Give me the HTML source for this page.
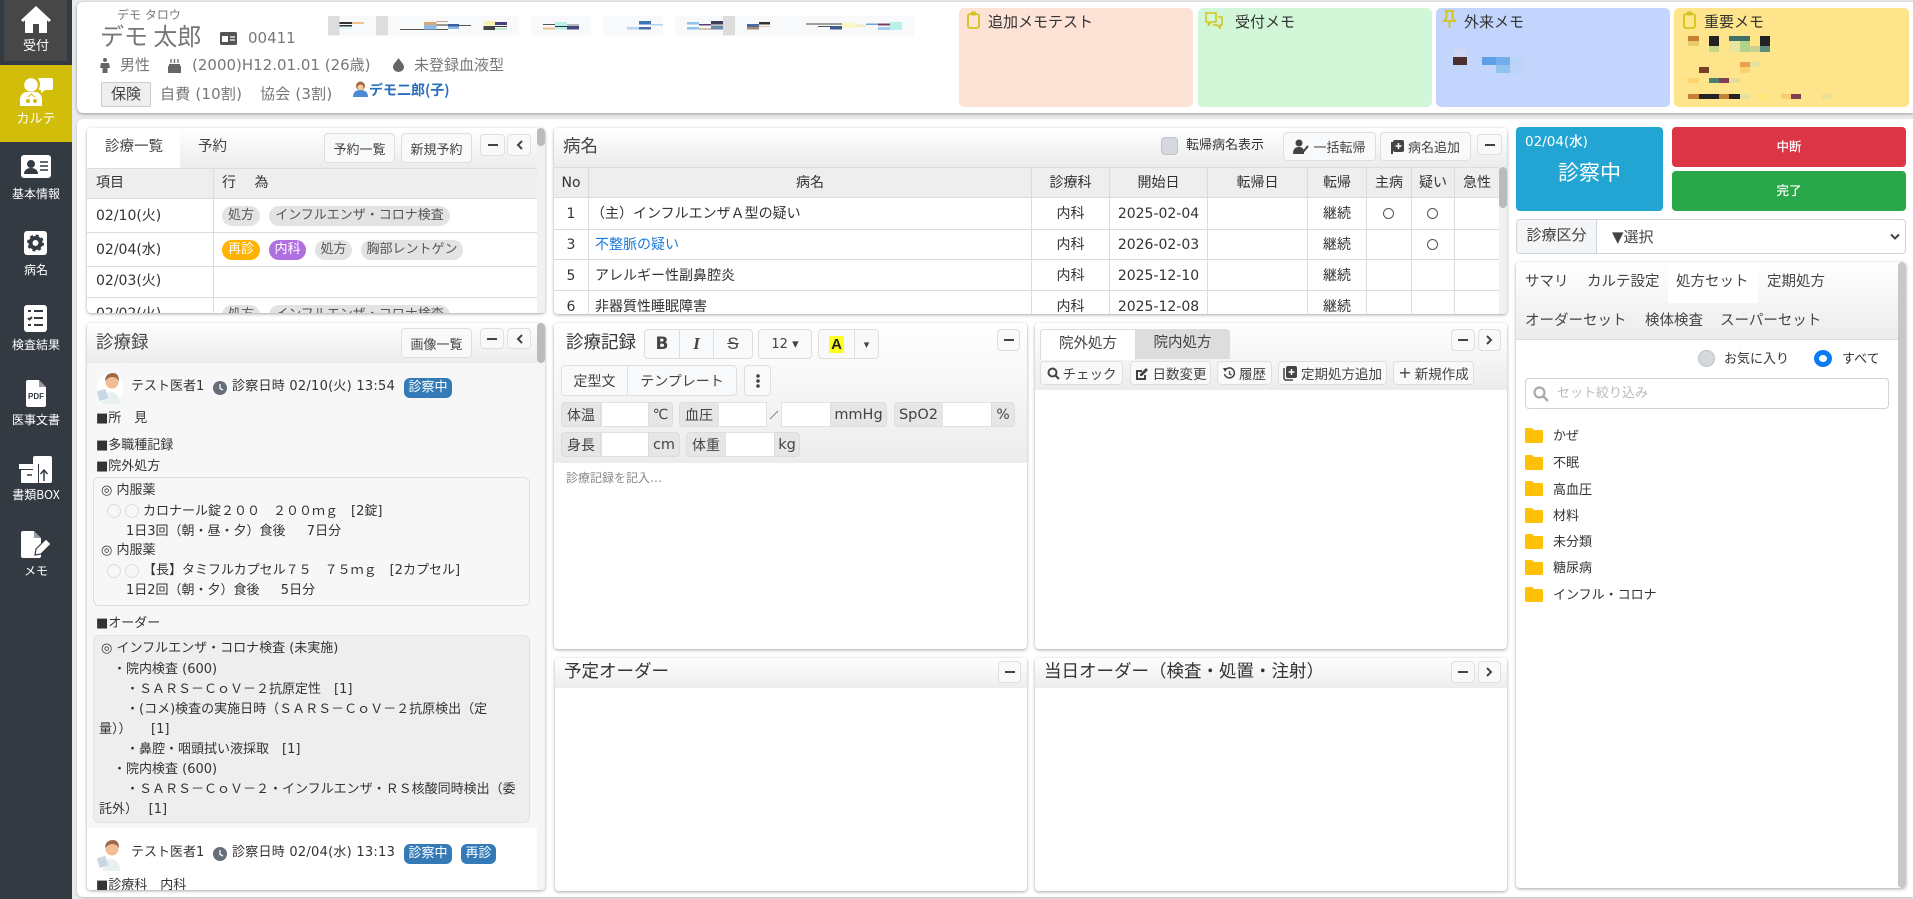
<!DOCTYPE html>
<html lang="ja"><head><meta charset="utf-8"><title>カルテ</title>
<style>
*{box-sizing:border-box}
html,body{margin:0;padding:0;width:1913px;height:899px;overflow:hidden;background:#eaeaea;font-family:"DejaVu Sans","Noto Sans CJK JP",sans-serif;font-size:13px;color:#333}
.a,.t,.b,.v{position:absolute}
.t{white-space:pre;line-height:20px;height:20px}
.w{color:#fff;font-weight:400;font-size:12px;text-align:center;left:0;width:72px;font-family:"Noto Sans CJK JP",sans-serif}
.b{background:#f8f9fa;border:1px solid #dfdfdf;border-radius:4px;display:flex;align-items:center;justify-content:center;color:#444;font-size:13px;white-space:pre}
.b svg{position:static}
.hd{background:linear-gradient(#fff,#ececec)}
.p{position:absolute;background:#fff;border-radius:4px;box-shadow:0 1px 3px rgba(0,0,0,.35);overflow:hidden}
.pl{position:absolute;height:20px;line-height:19px;border-radius:10px;background:#e3e3e3;color:#555;font-size:13px;text-align:center;white-space:pre}
.v{background:#e6e6e6;border:1px solid #dcdcdc;display:flex;align-items:center;justify-content:center;color:#444;font-size:14px;height:25px}
.i{background:#fff;border:1px solid #e2e2e2;height:25px;position:absolute}
.ln{position:absolute;background:#dcdcdc}
.c{text-align:center}
.bd{position:absolute;height:20px;line-height:19px;background:#337ab7;color:#fff;border-radius:6px;text-align:center;font-size:13px}
.fd{position:absolute;left:1525px;width:18px;height:15px}
svg{position:absolute;overflow:visible}
</style></head><body>

<!-- sidebar -->
<div class="a" style="left:0;top:0;width:72px;height:899px;background:#333a42"></div>
<div class="a" style="left:4px;top:0;width:63px;height:61px;background:#474747"></div>
<div class="a" style="left:0;top:65px;width:72px;height:77px;background:#d2bd0a"></div>
<svg style="left:21px;top:6px" width="30" height="27" viewBox="0 0 30 27"><path d="M15 0L30 14l-2 2-2-1.800V27H18V18H12V27H4V14.200L2 16 0 14z" fill="#fff"/></svg>
<div class="t w" style="top:35px;font-size:13px">受付</div>
<svg style="left:20px;top:78px" width="33" height="28" viewBox="0 0 33 28"><circle cx="11" cy="7" r="6.800" fill="#fff"/><path d="M20 0h11a2 2 0 0 1 2 2v8a2 2 0 0 1-2 2h-6l-4 3v-3h-1a2 2 0 0 1-1.500-.7c1-1.500 1.500-3.300 1.500-4.800 0-2.500-.8-4.500-1.800-5.800C18.600.2 19.300 0 20 0z" fill="#fff"/><path d="M0 28v-6c0-5 3-8 7-8h8c4 0 7 3 7 8v6z" fill="#fff"/><circle cx="8" cy="23" r="2" fill="#d2bd0a"/><circle cx="15" cy="23" r="2" fill="#d2bd0a"/><path d="M8 19l3-3 4 3" fill="none" stroke="#d2bd0a"/></svg>
<div class="t w" style="top:108px;font-size:13px">カルテ</div>
<svg style="left:21px;top:155px" width="30" height="23" viewBox="0 0 30 23"><rect width="30" height="23" rx="3" fill="#fff"/><circle cx="10" cy="9" r="4" fill="#333a42"/><path d="M3 19c0-4 3-6 7-6s7 2 7 6z" fill="#333a42"/><path d="M19 7h8M19 11h8M19 15h8" stroke="#333a42" stroke-width="1.500"/></svg>
<div class="t w" style="top:184px">基本情報</div>
<svg style="left:24px;top:231px" width="23" height="24" viewBox="0 0 23 24"><rect width="23" height="24" rx="3" fill="#fff"/><circle cx="11.500" cy="12" r="5" fill="none" stroke="#333a42" stroke-width="4"/><circle cx="11.500" cy="12" r="7.500" fill="none" stroke="#333a42" stroke-width="2" stroke-dasharray="3 2.900"/></svg>
<div class="t w" style="top:260px">病名</div>
<svg style="left:24px;top:305px" width="23" height="27" viewBox="0 0 23 27"><rect width="23" height="27" rx="3" fill="#fff"/><path d="M4 6h3M4 13l1.500 1.500L8 12M4 20h3M10 6h9M10 13h9M10 20h9" stroke="#333a42" stroke-width="2" fill="none"/></svg>
<div class="t w" style="top:335px">検査結果</div>
<svg style="left:26px;top:380px" width="20" height="27" viewBox="0 0 20 27"><path d="M0 2a2 2 0 0 1 2-2h11l7 7v18a2 2 0 0 1-2 2H2a2 2 0 0 1-2-2z" fill="#fff"/><path d="M13 0v7h7z" fill="#333a42" opacity=".5"/><text x="10" y="19" text-anchor="middle" font-size="8" font-weight="700" fill="#333a42" font-family="Liberation Sans,sans-serif">PDF</text></svg>
<div class="t w" style="top:410px">医事文書</div>
<svg style="left:19px;top:456px" width="33" height="27" viewBox="0 0 33 27"><rect x="14" width="19" height="27" rx="2" fill="#fff"/><rect y="8" width="20" height="5" fill="#fff"/><rect x="2" y="14" width="17" height="13" rx="1" fill="#fff"/><path d="M8 19h5" stroke="#333a42" stroke-width="1.500"/><path d="M25 25v-10M21.500 18l3.500-4 3.500 4" stroke="#333a42" stroke-width="1.500" fill="none"/><path d="M19.500 8v19" stroke="#333a42" stroke-width="1"/></svg>
<div class="t w" style="top:485px">書類BOX</div>
<svg style="left:21px;top:531px" width="31" height="27" viewBox="0 0 31 27"><path d="M0 2a2 2 0 0 1 2-2h11l7 7v18a2 2 0 0 1-2 2H2a2 2 0 0 1-2-2z" fill="#fff"/><path d="M13 0v7h7z" fill="#333a42" opacity=".5"/><path d="M14 24l1-6 10-10 5 5-10 10z" fill="#fff" stroke="#333a42" stroke-width="1.200"/></svg>
<div class="t w" style="top:561px">メモ</div>

<!-- header card -->
<div class="a" style="left:77px;top:2px;width:1836px;height:111px;background:#fff;border-radius:6px 0 0 6px;box-shadow:0 1px 3px rgba(0,0,0,.35)"></div>
<div class="t" style="left:117px;top:5px;font-size:12px;color:#777">デモ タロウ</div>
<div class="t" style="left:100px;top:20px;font-size:24px;line-height:30px;height:30px;color:#777;font-family:'Noto Sans CJK JP',sans-serif">デモ 太郎</div>
<svg style="left:220px;top:32px" width="17" height="13" viewBox="0 0 17 13"><rect width="17" height="13" rx="1.500" fill="#555"/><rect x="2" y="4" width="6" height="6" fill="#fff"/><path d="M10 5h5M10 8h5" stroke="#fff" stroke-width="1.300"/></svg>
<div class="t" style="left:248px;top:28px;font-size:15px;color:#777">00411</div>
<svg style="left:100px;top:58px" width="10" height="15" viewBox="0 0 10 15"><circle cx="5" cy="2" r="2" fill="#666"/><path d="M1 5h8l1 5H7.500v5h-5v-5H0z" fill="#666"/></svg>
<div class="t" style="left:120px;top:55px;font-size:15px;color:#777">男性</div>
<svg style="left:168px;top:58px" width="13" height="15" viewBox="0 0 13 15"><path d="M0 8h13v7H0zM1 6h11v2H1z" fill="#666"/><path d="M3 1v4M6.500 1v4M10 1v4" stroke="#666" stroke-width="1.300"/></svg>
<div class="t" style="left:192px;top:55px;font-size:15px;color:#777">(2000)H12.01.01 (26歳)</div>
<svg style="left:393px;top:58px" width="11" height="14" viewBox="0 0 11 14"><path d="M5.500 0C8 4 11 6 11 9a5.500 5 0 0 1-11 0C0 6 3 4 5.500 0z" fill="#666"/></svg>
<div class="t" style="left:414px;top:55px;font-size:15px;color:#777">未登録血液型</div>
<div class="a" style="left:101px;top:82px;width:50px;height:25px;background:#eee;border:1px solid #ccc;border-radius:2px;text-align:center;line-height:22px;font-size:15px;color:#444">保険</div>
<div class="t" style="left:160px;top:84px;font-size:15px;color:#777;letter-spacing:.2px">自費 (10割)</div>
<div class="t" style="left:260px;top:84px;font-size:15px;color:#777;letter-spacing:.2px">協会 (3割)</div>
<svg style="left:352px;top:81px" width="17" height="16" viewBox="0 0 17 16"><circle cx="8.500" cy="5" r="4.500" fill="#a5673f"/><circle cx="8.500" cy="6.500" r="3" fill="#f5c9a4"/><path d="M1 16c0-5 3-7 7.500-7S16 11 16 16z" fill="#4a8ad6"/></svg>
<div class="t" style="left:369px;top:80px;font-size:14px;font-weight:700;color:#2a6ebb;font-family:'Noto Sans CJK JP',sans-serif">デモ二郎(子)</div>

<!-- blurred strip -->
<svg style="left:320px;top:0" width="640" height="110" viewBox="0 0 1568 330" preserveAspectRatio="none" shape-rendering="crispEdges">
<rect x="20" y="48" width="28" height="59" fill="#ddd"/><rect x="48" y="48" width="89" height="59" fill="#f8f9fa"/>
<rect x="137" y="48" width="30" height="59" fill="#ddd"/><rect x="167" y="48" width="321" height="59" fill="#f8f9fa"/>
<rect x="517" y="48" width="147" height="59" fill="#f8f9fa"/><rect x="693" y="48" width="147" height="59" fill="#f8f9fa"/>
<rect x="870" y="48" width="117" height="59" fill="#f8f9fa"/><rect x="987" y="48" width="30" height="59" fill="#ddd"/><rect x="1017" y="48" width="438" height="59" fill="#f8f9fa"/>
<rect x="48" y="66" width="30" height="6" fill="#333"/><rect x="78" y="66" width="30" height="6" fill="#f3c28d"/><rect x="48" y="75" width="30" height="4" fill="#333"/><rect x="48" y="80" width="30" height="7" fill="#dff7f5"/>
<rect x="196" y="87" width="118" height="3" fill="#555"/><rect x="255" y="66" width="30" height="9" fill="#d9a877"/><rect x="255" y="75" width="30" height="13" fill="#8cbbe8"/><rect x="285" y="63" width="29" height="3" fill="#c8a090"/><rect x="285" y="74" width="29" height="3" fill="#333"/><rect x="314" y="72" width="27" height="8" fill="#3d5f9e"/><rect x="314" y="80" width="27" height="7" fill="#8cbbe8"/><rect x="341" y="75" width="29" height="3" fill="#555"/>
<rect x="400" y="63" width="29" height="13" fill="#f7f0b0"/><rect x="429" y="66" width="29" height="9" fill="#4a3f7a"/><rect x="400" y="78" width="29" height="12" fill="#444"/><rect x="429" y="78" width="29" height="3" fill="#333"/><rect x="429" y="84" width="29" height="6" fill="#bfe8cc"/>
<rect x="546" y="72" width="30" height="3" fill="#555"/><rect x="546" y="82" width="30" height="6" fill="#eac38f"/><rect x="576" y="66" width="29" height="12" fill="#b8f0ec"/><rect x="576" y="78" width="29" height="3" fill="#333"/><rect x="576" y="81" width="29" height="7" fill="#b8f0ec"/><rect x="605" y="72" width="30" height="6" fill="#bbb"/><rect x="605" y="78" width="30" height="10" fill="#454a7e"/>
<rect x="752" y="81" width="30" height="7" fill="#b5d4ee"/><rect x="782" y="63" width="29" height="10" fill="#3f74b5"/><rect x="782" y="81" width="29" height="7" fill="#4a6fa5"/><rect x="811" y="72" width="29" height="4" fill="#a8d8f0"/>
<rect x="899" y="66" width="30" height="8" fill="#8cc4ec"/><rect x="899" y="81" width="30" height="7" fill="#8cc4ec"/><rect x="929" y="72" width="29" height="5" fill="#5a3f70"/><rect x="929" y="86" width="29" height="3" fill="#b08a60"/><rect x="958" y="63" width="29" height="10" fill="#3a4258"/><rect x="958" y="76" width="29" height="13" fill="#6a8aa8"/>
<rect x="1046" y="72" width="30" height="9" fill="#4d6a9a"/><rect x="1046" y="81" width="30" height="7" fill="#a98b6c"/><rect x="1076" y="66" width="26" height="7" fill="#333"/><rect x="1076" y="78" width="26" height="3" fill="#e8c9a0"/>
<rect x="1191" y="71" width="88" height="3" fill="#444"/><rect x="1220" y="78" width="29" height="3" fill="#555"/><rect x="1249" y="78" width="30" height="10" fill="#3f5a92"/><rect x="1279" y="68" width="30" height="16" fill="#fbf7c8"/><rect x="1309" y="74" width="29" height="7" fill="#f3eec0"/><rect x="1338" y="71" width="29" height="4" fill="#6aa7d8"/><rect x="1367" y="71" width="29" height="6" fill="#7a3f60"/><rect x="1367" y="81" width="29" height="9" fill="#a5d0f0"/><rect x="1396" y="66" width="30" height="24" fill="#b8f0ea"/>
</svg>

<!-- memos -->
<div class="a" style="left:959px;top:8px;width:234px;height:99px;background:#fde2d6;border-radius:5px"></div>
<div class="a" style="left:1198px;top:8px;width:234px;height:99px;background:#d1f6d8;border-radius:5px"></div>
<div class="a" style="left:1436px;top:8px;width:234px;height:99px;background:#c3d5fc;border-radius:5px"></div>
<div class="a" style="left:1674px;top:8px;width:235px;height:99px;background:#fee58c;border-radius:5px"></div>
<svg style="left:967px;top:11px" width="13" height="18" viewBox="0 0 13 18"><rect x="1" y="3" width="11" height="14" rx="2" fill="none" stroke="#d4c21a" stroke-width="1.800"/><rect x="4" y="0.500" width="5" height="4" rx="1" fill="#d4c21a"/></svg>
<div class="t" style="left:988px;top:12px;font-size:15px;color:#333">追加メモテスト</div>
<svg style="left:1205px;top:12px" width="18" height="17" viewBox="0 0 18 17"><path d="M1 1h10v9H6l-2.500 3v-3H1z" fill="none" stroke="#d4c21a" stroke-width="1.500"/><path d="M13 5h4v8h-2v3l-3-3H8" fill="none" stroke="#d4c21a" stroke-width="1.500"/></svg>
<div class="t" style="left:1235px;top:12px;font-size:15px;color:#333">受付メモ</div>
<svg style="left:1443px;top:10px" width="13" height="19" viewBox="0 0 13 19"><path d="M2 1h9M3.500 1v7L1 11h11L9.500 8V1M6.500 11v7" fill="none" stroke="#d4c21a" stroke-width="1.800"/></svg>
<div class="t" style="left:1464px;top:12px;font-size:15px;color:#333">外来メモ</div>
<svg style="left:1683px;top:11px" width="13" height="18" viewBox="0 0 13 18"><rect x="1" y="3" width="11" height="14" rx="2" fill="none" stroke="#d4c21a" stroke-width="1.800"/><rect x="4" y="0.500" width="5" height="4" rx="1" fill="#d4c21a"/></svg>
<div class="t" style="left:1704px;top:12px;font-size:15px;color:#333">重要メモ</div>
<svg style="left:1500px;top:0" width="413" height="120" viewBox="0 0 1239 360" shape-rendering="crispEdges">
<rect x="564" y="108" width="33" height="15" fill="#c97e35"/><rect x="564" y="123" width="33" height="15" fill="#e8cc6a"/><rect x="627" y="108" width="30" height="30" fill="#222"/><rect x="627" y="138" width="30" height="18" fill="#c5d88a"/><rect x="687" y="108" width="63" height="15" fill="#3f7068"/><rect x="687" y="123" width="33" height="33" fill="#e8e5a0"/><rect x="720" y="123" width="30" height="33" fill="#b0d388"/><rect x="750" y="108" width="30" height="30" fill="#fde580"/><rect x="750" y="138" width="30" height="18" fill="#ccd090"/><rect x="780" y="108" width="30" height="30" fill="#222"/><rect x="780" y="138" width="30" height="18" fill="#5a8f7a"/>
<rect x="720" y="186" width="30" height="15" fill="#e8a24e"/><rect x="750" y="186" width="30" height="15" fill="#e8e0a0"/><rect x="720" y="201" width="30" height="18" fill="#fdd070"/><rect x="597" y="201" width="30" height="18" fill="#7a3f28"/>
<rect x="564" y="234" width="33" height="15" fill="#fdd570"/><rect x="627" y="234" width="30" height="15" fill="#4a8070"/><rect x="657" y="234" width="30" height="15" fill="#803f50"/><rect x="687" y="234" width="33" height="15" fill="#e5dc9c"/>
<rect x="564" y="282" width="33" height="15" fill="#c57f38"/><rect x="597" y="282" width="60" height="15" fill="#222"/><rect x="657" y="282" width="30" height="15" fill="#c57f38"/><rect x="687" y="282" width="33" height="15" fill="#222"/><rect x="720" y="282" width="30" height="15" fill="#e8e0a0"/><rect x="780" y="282" width="30" height="15" fill="#fde97a"/><rect x="843" y="282" width="30" height="15" fill="#fdcb70"/><rect x="873" y="282" width="30" height="15" fill="#803f50"/><rect x="966" y="282" width="30" height="15" fill="#ece094"/>
</svg>
<svg style="left:1450px;top:45px" width="80" height="35" viewBox="0 0 80 35" shape-rendering="crispEdges"><rect x="3" y="4" width="14" height="8" fill="#ced7f3"/><rect x="3" y="12" width="14" height="8" fill="#4c2f2f"/><rect x="32" y="12" width="14" height="8" fill="#5f9fe8"/><rect x="46" y="12" width="14" height="8" fill="#73aeec"/><rect x="46" y="20" width="14" height="8" fill="#8ec4ee"/><rect x="60" y="12" width="14" height="16" fill="#bcd3f8"/></svg>

<!-- main white background -->
<div class="a" style="left:77px;top:119px;width:1836px;height:778px;background:#fff;border-radius:6px 0 0 6px;box-shadow:0 1px 2px rgba(0,0,0,.2)"></div>

<!-- panel: 診療一覧 -->
<div class="p" style="left:87px;top:128px;width:458px;height:185px">
  <div class="a hd" style="left:0;top:0;width:450px;height:40px"></div>
  <div class="a" style="left:0;top:0;width:93px;height:40px;background:#fff"></div>
  <div class="a" style="left:0;top:40px;width:450px;height:31px;background:#eee;border-top:1px solid #ddd;border-bottom:1px solid #ddd"></div>
  <div class="ln" style="left:126px;top:40px;width:1px;height:145px"></div>
  <div class="ln" style="left:0;top:104px;width:450px;height:1px"></div>
  <div class="ln" style="left:0;top:138px;width:450px;height:1px"></div>
  <div class="ln" style="left:0;top:169px;width:450px;height:1px"></div>
  <div class="a" style="left:450px;top:0;width:8px;height:185px;background:#f1f1f1"></div>
  <div class="a" style="left:450px;top:0;width:8px;height:18px;background:#bbb;border-radius:4px"></div>
  <div class="t" style="left:18px;top:9px;font-size:14.500px;color:#444">診療一覧</div>
  <div class="t" style="left:111px;top:9px;font-size:14.500px;color:#444">予約</div>
  <div class="t" style="left:9px;top:45px;font-size:14px">項目</div>
  <div class="t" style="left:135px;top:45px;font-size:14px">行　 為</div>
  <div class="t" style="left:9px;top:78px;font-size:14px">02/10(火)</div>
  <div class="t" style="left:9px;top:112px;font-size:14px">02/04(水)</div>
  <div class="t" style="left:9px;top:143px;font-size:14px">02/03(火)</div>
  <div class="t" style="left:9px;top:176px;font-size:14px">02/02(火)</div>
  <div class="pl" style="left:135px;top:78px;width:38px">処方</div>
  <div class="pl" style="left:182px;top:78px;width:181px">インフルエンザ・コロナ検査</div>
  <div class="pl" style="left:135px;top:112px;width:38px;background:#ffb300;color:#fff">再診</div>
  <div class="pl" style="left:182px;top:112px;width:37px;background:#b06fe0;color:#fff">内科</div>
  <div class="pl" style="left:228px;top:112px;width:37px">処方</div>
  <div class="pl" style="left:274px;top:112px;width:102px">胸部レントゲン</div>
  <div class="pl" style="left:135px;top:177px;width:38px">処方</div>
  <div class="pl" style="left:182px;top:177px;width:181px">インフルエンザ・コロナ検査</div>
</div>
<div class="b" style="left:324px;top:133px;width:71px;height:30px">予約一覧</div>
<div class="b" style="left:401px;top:133px;width:71px;height:30px">新規予約</div>
<div class="b" style="left:480px;top:134px;width:25px;height:22px"><svg width="10" height="2" viewBox="0 0 10 2"><path d="M0 1h10" stroke="#444" stroke-width="2"/></svg></div>
<div class="b" style="left:507px;top:134px;width:24px;height:22px"><svg width="7" height="10" viewBox="0 0 7 10"><path d="M6 1L2 5l4 4" stroke="#444" stroke-width="2" fill="none"/></svg></div>

<!-- panel: 診療録 -->
<div class="p" style="left:87px;top:323px;width:458px;height:567px;background:#f7f7f7">
  <div class="a hd" style="left:0;top:0;width:450px;height:40px"></div>
  <div class="a" style="left:450px;top:0;width:8px;height:567px;background:#f5f5f5"></div>
  <div class="a" style="left:450px;top:0;width:8px;height:40px;background:#bbb;border-radius:4px"></div>
  <div class="t" style="left:9px;top:10px;font-size:17.500px;color:#444">診療録</div>
  <div class="a" style="left:0;top:505px;width:450px;height:62px;background:#fff"></div>
</div>
<div class="b" style="left:401px;top:328px;width:71px;height:30px">画像一覧</div>
<div class="b" style="left:480px;top:328px;width:24px;height:21px"><svg width="10" height="2" viewBox="0 0 10 2"><path d="M0 1h10" stroke="#444" stroke-width="2"/></svg></div>
<div class="b" style="left:507px;top:328px;width:24px;height:21px"><svg width="7" height="10" viewBox="0 0 7 10"><path d="M6 1L2 5l4 4" stroke="#444" stroke-width="2" fill="none"/></svg></div>

<svg style="left:97px;top:371px" width="27" height="33" viewBox="0 0 27 33"><ellipse cx="13" cy="17" rx="13" ry="16" fill="#fff"/><path d="M6 33c0-8 3-12 8-12s9 4 9 12z" fill="#e8f0f0"/><circle cx="15" cy="11" r="6.500" fill="#f2bd94"/><path d="M8 10c0-6 4-8 8-8s6 3 6 8c-2-3-4-4-7-4s-5 2-7 4z" fill="#9b6a4a"/><rect x="1" y="19" width="9" height="10" fill="#c9d8e4" transform="rotate(-18 5 24)"/></svg>
<div class="t" style="left:131px;top:377px">テスト医者1</div>
<svg style="left:213px;top:381px" width="14" height="14" viewBox="0 0 14 14"><circle cx="7" cy="7" r="7" fill="#666f78"/><path d="M7 3v4.500l3 1.500" stroke="#fff" stroke-width="1.300" fill="none"/></svg>
<div class="t" style="left:232px;top:377px;letter-spacing:.25px">診察日時 02/10(火) 13:54</div>
<div class="bd" style="left:404px;top:378px;width:48px">診察中</div>
<div class="t" style="left:96px;top:409px">■所　見</div>
<div class="t" style="left:96px;top:436px">■多職種記録</div>
<div class="t" style="left:96px;top:457px">■院外処方</div>
<div class="a" style="left:93px;top:477px;width:437px;height:129px;border:1px solid #ddd;border-radius:6px;background:#f7f7f7"></div>
<div class="t" style="left:101px;top:481px">◎ 内服薬</div>
<div class="a" style="left:107px;top:504px;width:14px;height:14px;border:1px solid #ddd;border-radius:50%"></div>
<div class="a" style="left:125px;top:504px;width:14px;height:14px;border:1px solid #ddd;border-radius:50%"></div>
<div class="t" style="left:143px;top:502px">カロナール錠２００　２００ｍｇ　[2錠]</div>
<div class="t" style="left:126px;top:522px">1日3回（朝・昼・夕）食後　  7日分</div>
<div class="t" style="left:101px;top:541px">◎ 内服薬</div>
<div class="a" style="left:107px;top:564px;width:14px;height:14px;border:1px solid #ddd;border-radius:50%"></div>
<div class="a" style="left:125px;top:564px;width:14px;height:14px;border:1px solid #ddd;border-radius:50%"></div>
<div class="t" style="left:143px;top:561px">【長】タミフルカプセル７５　７５ｍｇ　[2カプセル]</div>
<div class="t" style="left:126px;top:581px">1日2回（朝・夕）食後　  5日分</div>
<div class="t" style="left:96px;top:614px">■オーダー</div>
<div class="a" style="left:93px;top:635px;width:437px;height:188px;border:1px solid #e2e2e2;border-radius:6px;background:#eee"></div>
<div class="t" style="left:101px;top:639px">◎ インフルエンザ・コロナ検査 (未実施)</div>
<div class="t" style="left:113px;top:660px">・院内検査 (600)</div>
<div class="t" style="left:126px;top:680px">・ＳＡＲＳ－ＣｏＶ－２抗原定性　[1]</div>
<div class="t" style="left:126px;top:700px">・(コメ)検査の実施日時（ＳＡＲＳ－ＣｏＶ－２抗原検出（定</div>
<div class="t" style="left:99px;top:720px">量））　　[1]</div>
<div class="t" style="left:126px;top:740px">・鼻腔・咽頭拭い液採取　[1]</div>
<div class="t" style="left:113px;top:760px">・院内検査 (600)</div>
<div class="t" style="left:126px;top:780px">・ＳＡＲＳ－ＣｏＶ－２・インフルエンザ・ＲＳ核酸同時検出（委</div>
<div class="t" style="left:99px;top:800px">託外）　 [1]</div>
<svg style="left:97px;top:838px" width="27" height="33" viewBox="0 0 27 33"><path d="M6 33c0-8 3-12 8-12s9 4 9 12z" fill="#e8f0f0"/><circle cx="15" cy="11" r="6.500" fill="#f2bd94"/><path d="M8 10c0-6 4-8 8-8s6 3 6 8c-2-3-4-4-7-4s-5 2-7 4z" fill="#9b6a4a"/><rect x="1" y="19" width="9" height="10" fill="#c9d8e4" transform="rotate(-18 5 24)"/></svg>
<div class="t" style="left:131px;top:843px">テスト医者1</div>
<svg style="left:213px;top:847px" width="14" height="14" viewBox="0 0 14 14"><circle cx="7" cy="7" r="7" fill="#666f78"/><path d="M7 3v4.500l3 1.500" stroke="#fff" stroke-width="1.300" fill="none"/></svg>
<div class="t" style="left:232px;top:843px;letter-spacing:.25px">診察日時 02/04(水) 13:13</div>
<div class="bd" style="left:404px;top:844px;width:48px">診察中</div>
<div class="bd" style="left:461px;top:844px;width:35px">再診</div>
<div class="a" style="left:87px;top:876px;width:450px;height:14px;overflow:hidden"><div class="t" style="left:9px;top:0">■診療科　内科</div></div>

<!-- panel: 病名 -->
<div class="p" style="left:554px;top:128px;width:953px;height:186px">
  <div class="a hd" style="left:0;top:0;width:953px;height:39px"></div>
  <div class="a" style="left:0;top:39px;width:953px;height:31px;background:#eee;border-top:1px solid #ddd;border-bottom:1px solid #ddd"></div>
  <div class="a" style="left:945px;top:39px;width:8px;height:147px;background:#f1f1f1"></div>
  <div class="a" style="left:945px;top:39px;width:8px;height:41px;background:#bbb;border-radius:4px"></div>
  <div class="ln" style="left:0;top:101px;width:945px;height:1px"></div>
  <div class="ln" style="left:0;top:131px;width:945px;height:1px"></div>
  <div class="ln" style="left:0;top:162px;width:945px;height:1px"></div>
  <div class="ln" style="left:34px;top:39px;width:1px;height:147px"></div>
  <div class="ln" style="left:477px;top:39px;width:1px;height:147px"></div>
  <div class="ln" style="left:555px;top:39px;width:1px;height:147px"></div>
  <div class="ln" style="left:653px;top:39px;width:1px;height:147px"></div>
  <div class="ln" style="left:753px;top:39px;width:1px;height:147px"></div>
  <div class="ln" style="left:812px;top:39px;width:1px;height:147px"></div>
  <div class="ln" style="left:857px;top:39px;width:1px;height:147px"></div>
  <div class="ln" style="left:900px;top:39px;width:1px;height:147px"></div>
  <div class="t" style="left:9px;top:9px;font-size:17.500px;color:#444">病名</div>
  <!-- thead -->
  <div class="t c" style="left:0;top:45px;width:34px;font-size:14px">No</div>
  <div class="t c" style="left:35px;top:45px;width:442px;font-size:14px">病名</div>
  <div class="t c" style="left:478px;top:45px;width:77px;font-size:14px">診療科</div>
  <div class="t c" style="left:556px;top:45px;width:97px;font-size:14px">開始日</div>
  <div class="t c" style="left:654px;top:45px;width:99px;font-size:14px">転帰日</div>
  <div class="t c" style="left:754px;top:45px;width:58px;font-size:14px">転帰</div>
  <div class="t c" style="left:813px;top:45px;width:44px;font-size:14px">主病</div>
  <div class="t c" style="left:858px;top:45px;width:42px;font-size:14px">疑い</div>
  <div class="t c" style="left:901px;top:45px;width:44px;font-size:14px">急性</div>
  <!-- r1 -->
  <div class="t c" style="left:0;top:76px;width:34px;font-size:14px">1</div>
  <div class="t" style="left:37px;top:76px;font-size:14px">（主）インフルエンザＡ型の疑い</div>
  <div class="t c" style="left:478px;top:76px;width:77px;font-size:14px">内科</div>
  <div class="t c" style="left:556px;top:76px;width:97px;font-size:14px">2025-02-04</div>
  <div class="t c" style="left:754px;top:76px;width:58px;font-size:14px">継続</div>
  <div class="a" style="left:829px;top:80px;width:11px;height:11px;border:1px solid #555;border-radius:50%"></div>
  <div class="a" style="left:873px;top:80px;width:11px;height:11px;border:1px solid #555;border-radius:50%"></div>
  <!-- r2 -->
  <div class="t c" style="left:0;top:107px;width:34px;font-size:14px">3</div>
  <div class="t" style="left:41px;top:107px;font-size:14px;color:#1a7bd8">不整脈の疑い</div>
  <div class="t c" style="left:478px;top:107px;width:77px;font-size:14px">内科</div>
  <div class="t c" style="left:556px;top:107px;width:97px;font-size:14px">2026-02-03</div>
  <div class="t c" style="left:754px;top:107px;width:58px;font-size:14px">継続</div>
  <div class="a" style="left:873px;top:111px;width:11px;height:11px;border:1px solid #555;border-radius:50%"></div>
  <!-- r3 -->
  <div class="t c" style="left:0;top:138px;width:34px;font-size:14px">5</div>
  <div class="t" style="left:41px;top:138px;font-size:14px">アレルギー性副鼻腔炎</div>
  <div class="t c" style="left:478px;top:138px;width:77px;font-size:14px">内科</div>
  <div class="t c" style="left:556px;top:138px;width:97px;font-size:14px">2025-12-10</div>
  <div class="t c" style="left:754px;top:138px;width:58px;font-size:14px">継続</div>
  <!-- r4 -->
  <div class="t c" style="left:0;top:169px;width:34px;font-size:14px">6</div>
  <div class="t" style="left:41px;top:169px;font-size:14px">非器質性睡眠障害</div>
  <div class="t c" style="left:478px;top:169px;width:77px;font-size:14px">内科</div>
  <div class="t c" style="left:556px;top:169px;width:97px;font-size:14px">2025-12-08</div>
  <div class="t c" style="left:754px;top:169px;width:58px;font-size:14px">継続</div>
</div>
<div class="a" style="left:1161px;top:137px;width:17px;height:18px;background:#d5d9de;border:1px solid #bcc2c8;border-radius:4px"></div>
<div class="t" style="left:1186px;top:136px">転帰病名表示</div>
<div class="b" style="left:1283px;top:132px;width:93px;height:29px"><svg style="margin-right:4px" width="16" height="16" viewBox="0 0 16 16"><circle cx="6" cy="4" r="3.500" fill="#444"/><path d="M0 15c0-5 2-7 6-7s5 2 5 7z" fill="#444"/><path d="M10 13l5-6" stroke="#444" stroke-width="2"/></svg>一括転帰</div>
<div class="b" style="left:1380px;top:132px;width:91px;height:29px"><svg style="margin-right:4px" width="13" height="14" viewBox="0 0 13 14"><rect x="2" y="0" width="11" height="12" rx="2" fill="#444"/><rect x="0" y="2" width="2" height="12" fill="#444"/><path d="M7.500 3v6M4.500 6h6" stroke="#fff" stroke-width="1.500"/></svg>病名追加</div>
<div class="b" style="left:1477px;top:134px;width:25px;height:21px"><svg width="10" height="2" viewBox="0 0 10 2"><path d="M0 1h10" stroke="#444" stroke-width="2"/></svg></div>

<!-- panel: 診療記録 -->
<div class="p" style="left:554px;top:323px;width:473px;height:326px">
  <div class="a hd" style="left:0;top:0;width:473px;height:140px"></div>
  <div class="t" style="left:12px;top:10px;font-size:17.500px;color:#333">診療記録</div>
  <div class="t" style="left:12px;top:145px;font-size:12px;color:#888">診療記録を記入…</div>
</div>
<div class="b" style="left:644px;top:329px;width:36px;height:30px;border-radius:4px 0 0 4px;font:700 17px 'DejaVu Sans',sans-serif">B</div>
<div class="b" style="left:679px;top:329px;width:35px;height:30px;border-radius:0;font:italic 700 17px 'Liberation Serif',serif">I</div>
<div class="b" style="left:713px;top:329px;width:40px;height:30px;border-radius:0 4px 4px 0;font:17px 'Liberation Sans',sans-serif"><s>S</s></div>
<div class="b" style="left:758px;top:329px;width:54px;height:30px;font-size:13px">12 ▾</div>
<div class="b" style="left:818px;top:329px;width:37px;height:30px;border-radius:4px 0 0 4px"><span style="background:#ffff20;font:700 15px 'Liberation Sans',sans-serif;padding:0 2px;color:#222">A</span></div>
<div class="b" style="left:854px;top:329px;width:25px;height:30px;border-radius:0 4px 4px 0;font-size:11px">▾</div>
<div class="b" style="left:997px;top:329px;width:23px;height:22px"><svg width="10" height="2" viewBox="0 0 10 2"><path d="M0 1h10" stroke="#444" stroke-width="2"/></svg></div>
<div class="b" style="left:561px;top:365px;width:67px;height:31px;border-radius:4px 0 0 4px;font-size:14px">定型文</div>
<div class="b" style="left:627px;top:365px;width:110px;height:31px;border-radius:0 4px 4px 0;font-size:14px">テンプレート</div>
<div class="b" style="left:744px;top:365px;width:27px;height:31px"><svg width="4" height="14" viewBox="0 0 4 14"><circle cx="2" cy="2" r="1.800" fill="#444"/><circle cx="2" cy="7" r="1.800" fill="#444"/><circle cx="2" cy="12" r="1.800" fill="#444"/></svg></div>

<div class="v" style="left:561px;top:402px;width:40px;border-radius:4px 0 0 4px">体温</div><div class="i" style="left:601px;top:402px;width:48px"></div><div class="v" style="left:648px;top:402px;width:25px;border-radius:0 4px 4px 0">℃</div>
<div class="v" style="left:679px;top:402px;width:40px;border-radius:4px 0 0 4px">血圧</div><div class="i" style="left:718px;top:402px;width:49px"></div><svg style="left:767px;top:410px" width="14" height="10" viewBox="0 0 14 10"><path d="M3 9l8-8" stroke="#888"/></svg><div class="i" style="left:781px;top:402px;width:50px"></div><div class="v" style="left:830px;top:402px;width:57px;border-radius:0 4px 4px 0;font-size:14.500px">mmHg</div>
<div class="v" style="left:894px;top:402px;width:49px;border-radius:4px 0 0 4px;font-size:14.500px">SpO2</div><div class="i" style="left:942px;top:402px;width:50px"></div><div class="v" style="left:991px;top:402px;width:24px;border-radius:0 4px 4px 0">%</div>
<div class="v" style="left:561px;top:432px;width:40px;border-radius:4px 0 0 4px">身長</div><div class="i" style="left:601px;top:432px;width:48px"></div><div class="v" style="left:648px;top:432px;width:32px;border-radius:0 4px 4px 0;font-size:14.500px">cm</div>
<div class="v" style="left:686px;top:432px;width:40px;border-radius:4px 0 0 4px">体重</div><div class="i" style="left:725px;top:432px;width:50px"></div><div class="v" style="left:774px;top:432px;width:26px;border-radius:0 4px 4px 0;font-size:14.500px">kg</div>

<!-- panel: 処方 -->
<div class="p" style="left:1035px;top:323px;width:472px;height:326px">
  <div class="a hd" style="left:0;top:0;width:472px;height:67px"></div>
</div>
<div class="a" style="left:1040px;top:329px;width:96px;height:31px;background:#fff;border:1px solid #ddd;border-bottom:0;border-radius:4px 0 0 0;text-align:center;line-height:28px;font-size:14.500px;color:#444">院外処方</div>
<div class="a" style="left:1135px;top:329px;width:95px;height:30px;background:#ddd;border-radius:0 4px 0 0;text-align:center;line-height:28px;font-size:14.500px;color:#444">院内処方</div>
<div class="b" style="left:1451px;top:329px;width:24px;height:22px"><svg width="10" height="2" viewBox="0 0 10 2"><path d="M0 1h10" stroke="#444" stroke-width="2"/></svg></div>
<div class="b" style="left:1478px;top:329px;width:23px;height:22px"><svg width="7" height="10" viewBox="0 0 7 10"><path d="M1 1l4 4-4 4" stroke="#444" stroke-width="2" fill="none"/></svg></div>
<div class="b" style="left:1040px;top:361px;width:83px;height:24px;font-size:13.500px"><svg style="margin-right:3px" width="13" height="13" viewBox="0 0 13 13"><circle cx="5.500" cy="5.500" r="4" fill="none" stroke="#444" stroke-width="2"/><path d="M8.500 8.500L12 12" stroke="#444" stroke-width="2"/></svg>チェック</div>
<div class="b" style="left:1130px;top:361px;width:81px;height:24px;font-size:13.500px"><svg style="margin-right:5px" width="13" height="13" viewBox="0 0 13 13"><path d="M1 3h6v2H3v6h6V8h2v5H1z" fill="#444"/><path d="M5 9V7l6-6 2 2-6 6z" fill="#444"/></svg>日数変更</div>
<div class="b" style="left:1217px;top:361px;width:55px;height:24px;font-size:13.500px"><svg style="margin-right:3px" width="13" height="13" viewBox="0 0 13 13"><path d="M2 3.500A5 5 0 1 1 1.500 7" fill="none" stroke="#444" stroke-width="1.500"/><path d="M0 1l4.500 0L2 5z" fill="#444"/><path d="M6.500 4v3l2 1" fill="none" stroke="#444" stroke-width="1.300"/></svg>履歴</div>
<div class="b" style="left:1278px;top:361px;width:109px;height:24px;font-size:13.500px"><svg style="margin-right:4px" width="14" height="14" viewBox="0 0 14 14"><rect x="3" y="0" width="11" height="12" rx="2" fill="#444"/><path d="M1 2v10a2 2 0 0 0 2 2h7" fill="none" stroke="#444" stroke-width="1.500"/><path d="M8.500 3v6M5.500 6h6" stroke="#fff" stroke-width="1.500"/></svg>定期処方追加</div>
<div class="b" style="left:1393px;top:361px;width:81px;height:24px;font-size:13.500px"><span style="font-size:16px;margin-right:3px;line-height:14px">+</span>新規作成</div>

<!-- bottom panels -->
<div class="p" style="left:555px;top:658px;width:472px;height:233px"><div class="a hd" style="left:0;top:0;width:472px;height:30px"></div><div class="t" style="left:9px;top:4px;font-size:17.500px;color:#333">予定オーダー</div></div>
<div class="b" style="left:998px;top:661px;width:23px;height:22px"><svg width="10" height="2" viewBox="0 0 10 2"><path d="M0 1h10" stroke="#444" stroke-width="2"/></svg></div>
<div class="p" style="left:1035px;top:658px;width:472px;height:233px"><div class="a hd" style="left:0;top:0;width:472px;height:30px"></div><div class="t" style="left:9px;top:4px;font-size:17.500px;color:#333">当日オーダー（検査・処置・注射）</div></div>
<div class="b" style="left:1451px;top:661px;width:24px;height:22px"><svg width="10" height="2" viewBox="0 0 10 2"><path d="M0 1h10" stroke="#444" stroke-width="2"/></svg></div>
<div class="b" style="left:1478px;top:661px;width:23px;height:22px"><svg width="7" height="10" viewBox="0 0 7 10"><path d="M1 1l4 4-4 4" stroke="#444" stroke-width="2" fill="none"/></svg></div>

<!-- right column -->
<div class="a" style="left:1516px;top:127px;width:147px;height:84px;background:#22a5d2;border-radius:4px"></div>
<div class="t" style="left:1525px;top:132px;font-size:13.500px;color:#fff;font-weight:500">02/04(水)</div>
<div class="t c" style="left:1516px;top:160px;width:147px;font-size:21px;line-height:26px;height:26px;color:#fff">診察中</div>
<div class="a c" style="left:1672px;top:127px;width:234px;height:40px;background:#dc3545;border-radius:4px;color:#fff;font-size:12.500px;font-weight:500;line-height:38px;font-family:'Noto Sans CJK JP',sans-serif">中断</div>
<div class="a c" style="left:1672px;top:171px;width:234px;height:40px;background:#2aa748;border-radius:4px;color:#fff;font-size:12.500px;font-weight:500;line-height:38px;font-family:'Noto Sans CJK JP',sans-serif">完了</div>
<div class="a" style="left:1516px;top:219px;width:390px;height:35px;background:#fff;border:1px solid #ced4da;border-radius:4px"></div>
<div class="a" style="left:1517px;top:220px;width:80px;height:33px;background:#f4f5f7;border-right:1px solid #ced4da;border-radius:4px 0 0 4px;text-align:center;line-height:31px;font-size:15px;color:#444">診療区分</div>
<div class="t" style="left:1612px;top:227px;font-size:15px;color:#444">▼選択</div>
<svg style="left:1889px;top:233px" width="12" height="8" viewBox="0 0 12 8"><path d="M2 1.500l4 4 4-4" fill="none" stroke="#444" stroke-width="2"/></svg>

<div class="p" style="left:1516px;top:262px;width:390px;height:626px">
  <div class="a hd" style="left:0;top:0;width:382px;height:78px;border-bottom:1px solid #ddd"></div>
  <div class="a" style="left:152px;top:0;width:90px;height:41px;background:#fff"></div>
  <div class="a" style="left:382px;top:0;width:8px;height:626px;background:#c8c8c8;border-radius:4px"></div>
  <div class="t" style="left:9px;top:10px;font-size:14.500px;color:#444">サマリ</div>
  <div class="t" style="left:71px;top:10px;font-size:14.500px;color:#444">カルテ設定</div>
  <div class="t" style="left:160px;top:10px;font-size:14.500px;color:#444">処方セット</div>
  <div class="t" style="left:251px;top:10px;font-size:14.500px;color:#444">定期処方</div>
  <div class="t" style="left:9px;top:49px;font-size:14.500px;color:#444">オーダーセット</div>
  <div class="t" style="left:129px;top:49px;font-size:14.500px;color:#444">検体検査</div>
  <div class="t" style="left:204px;top:49px;font-size:14.500px;color:#444">スーパーセット</div>
</div>
<div class="a" style="left:1698px;top:350px;width:17px;height:17px;border-radius:50%;background:#d5d9de;border:1px solid #bcc2c8"></div>
<div class="t" style="left:1724px;top:350px">お気に入り</div>
<div class="a" style="left:1814px;top:350px;width:18px;height:17px;border-radius:50%;background:#fff;border:5px solid #0a7bf5"></div>
<div class="t" style="left:1842px;top:350px">すべて</div>
<div class="a" style="left:1525px;top:378px;width:364px;height:31px;background:#fff;border:1px solid #ced4da;border-radius:4px"></div>
<svg style="left:1533px;top:386px" width="16" height="16" viewBox="0 0 16 16"><circle cx="6.500" cy="6.500" r="5" fill="none" stroke="#aaa" stroke-width="2.200"/><path d="M10.500 10.500L15 15" stroke="#aaa" stroke-width="2.500"/></svg>
<div class="t" style="left:1557px;top:384px;font-size:13px;color:#bbb">セット絞り込み</div>

<svg class="fd" style="top:428px" viewBox="0 0 18 15"><path d="M0 1.500A1.500 1.500 0 0 1 1.500 0H7l2 2h7.500A1.500 1.500 0 0 1 18 3.500v10a1.500 1.500 0 0 1-1.500 1.500h-15A1.500 1.500 0 0 1 0 13.500z" fill="#ffc107"/></svg>
<div class="t" style="left:1553px;top:427px">かぜ</div>
<svg class="fd" style="top:455px" viewBox="0 0 18 15"><path d="M0 1.500A1.500 1.500 0 0 1 1.500 0H7l2 2h7.500A1.500 1.500 0 0 1 18 3.500v10a1.500 1.500 0 0 1-1.500 1.500h-15A1.500 1.500 0 0 1 0 13.500z" fill="#ffc107"/></svg>
<div class="t" style="left:1553px;top:454px">不眠</div>
<svg class="fd" style="top:481px" viewBox="0 0 18 15"><path d="M0 1.500A1.500 1.500 0 0 1 1.500 0H7l2 2h7.500A1.500 1.500 0 0 1 18 3.500v10a1.500 1.500 0 0 1-1.500 1.500h-15A1.500 1.500 0 0 1 0 13.500z" fill="#ffc107"/></svg>
<div class="t" style="left:1553px;top:481px">高血圧</div>
<svg class="fd" style="top:508px" viewBox="0 0 18 15"><path d="M0 1.500A1.500 1.500 0 0 1 1.500 0H7l2 2h7.500A1.500 1.500 0 0 1 18 3.500v10a1.500 1.500 0 0 1-1.500 1.500h-15A1.500 1.500 0 0 1 0 13.500z" fill="#ffc107"/></svg>
<div class="t" style="left:1553px;top:507px">材料</div>
<svg class="fd" style="top:534px" viewBox="0 0 18 15"><path d="M0 1.500A1.500 1.500 0 0 1 1.500 0H7l2 2h7.500A1.500 1.500 0 0 1 18 3.500v10a1.500 1.500 0 0 1-1.500 1.500h-15A1.500 1.500 0 0 1 0 13.500z" fill="#ffc107"/></svg>
<div class="t" style="left:1553px;top:533px">未分類</div>
<svg class="fd" style="top:560px" viewBox="0 0 18 15"><path d="M0 1.500A1.500 1.500 0 0 1 1.500 0H7l2 2h7.500A1.500 1.500 0 0 1 18 3.500v10a1.500 1.500 0 0 1-1.500 1.500h-15A1.500 1.500 0 0 1 0 13.500z" fill="#ffc107"/></svg>
<div class="t" style="left:1553px;top:559px">糖尿病</div>
<svg class="fd" style="top:587px" viewBox="0 0 18 15"><path d="M0 1.500A1.500 1.500 0 0 1 1.500 0H7l2 2h7.500A1.500 1.500 0 0 1 18 3.500v10a1.500 1.500 0 0 1-1.500 1.500h-15A1.500 1.500 0 0 1 0 13.500z" fill="#ffc107"/></svg>
<div class="t" style="left:1553px;top:586px">インフル・コロナ</div>

</body></html>
